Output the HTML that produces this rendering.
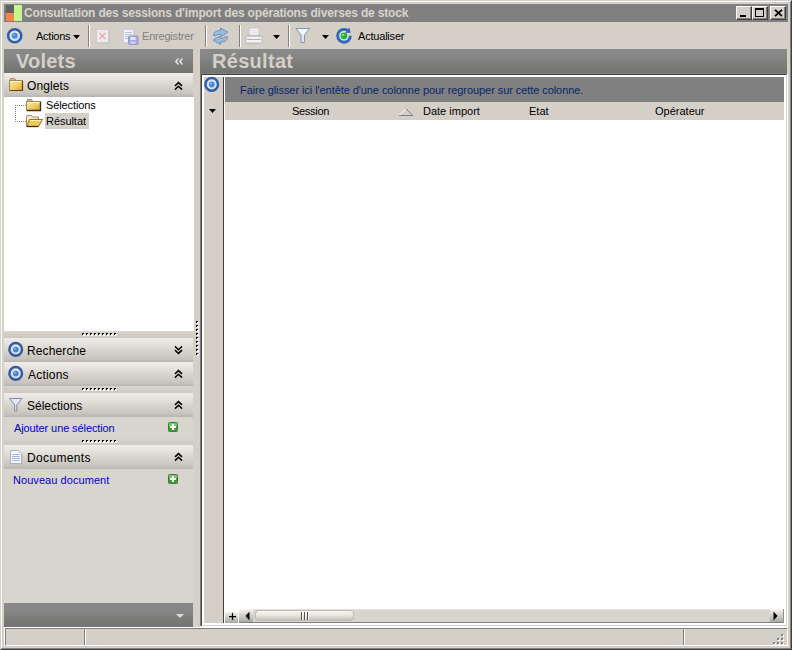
<!DOCTYPE html>
<html><head><meta charset="utf-8">
<style>
*{margin:0;padding:0;box-sizing:border-box}
html,body{width:792px;height:650px;overflow:hidden;background:#d4d0c8;font-family:"Liberation Sans",sans-serif;font-size:11px;color:#000}
.a{position:absolute}
.t{position:absolute;white-space:nowrap;line-height:13px}
svg{position:absolute;overflow:visible}
.cb{position:absolute;top:6px;width:16px;height:14px;background:#d4d0c8;border-top:1px solid #fff;border-left:1px solid #fff;border-right:1px solid #404040;border-bottom:1px solid #404040;box-shadow:inset -1px -1px 0 #808080}
.sep{position:absolute;top:25px;width:2px;height:22px;border-left:1px solid #808080;border-right:1px solid #fff}
.phdr{position:absolute;background:linear-gradient(#8a8a8a,#868686 35%,#7b7b79 65%,#737373)}
.ghdr{position:absolute;background:linear-gradient(#f0ede8 0,#e6e2dd 25%,#d6d3cd 55%,#c9c5be 85%,#b8b5b0 100%)}
.gt{position:absolute;white-space:nowrap;line-height:14px;font-size:12px}
.spl{position:absolute;left:4px;width:189px;height:7px;background:linear-gradient(#d8d5ce,#ccc8c0)}
.dots{position:absolute;width:36px;height:3px;background-image:linear-gradient(90deg,#000 2px,transparent 2px);background-size:4px 2px;background-repeat:repeat-x}
.dotsw{position:absolute;width:36px;height:3px;background-image:linear-gradient(90deg,transparent 1px,#fff 1px,#fff 2px,transparent 2px);background-size:4px 1px;background-repeat:repeat-x}
.lnk{position:absolute;white-space:nowrap;line-height:13px;color:#0000c8}
</style></head>
<body>
<!-- window frame -->
<div class="a" style="left:0;top:0;width:792px;height:650px;border-top:1px solid #d4d0c8;border-left:1px solid #d4d0c8;border-right:1px solid #404040;border-bottom:1px solid #404040"></div>
<div class="a" style="left:1px;top:1px;width:790px;height:648px;border-top:1px solid #fff;border-left:1px solid #fff;border-right:1px solid #808080;border-bottom:1px solid #808080"></div>

<!-- title bar -->
<div class="a" style="left:4px;top:4px;width:784px;height:18px;background:#808080"></div>
<div class="a" style="left:6px;top:5px;width:8px;height:8px;background:#626262"></div>
<div class="a" style="left:6px;top:13px;width:8px;height:8px;background:#f7854a"></div>
<div class="a" style="left:14px;top:5px;width:8px;height:16px;background:#c6f68e"></div>
<div class="t" style="left:24px;top:6px;font-weight:bold;color:#d8d4cc;font-size:12px;line-height:14px;letter-spacing:-0.17px">Consultation des sessions d'import des opérations diverses de stock</div>
<div class="cb" style="left:736px"><div class="a" style="left:3px;top:8px;width:6px;height:2px;background:#000"></div></div>
<div class="cb" style="left:752px"><div class="a" style="left:2px;top:1px;width:9px;height:9px;border:1px solid #000;border-top-width:2px"></div></div>
<div class="cb" style="left:770px"><svg style="left:3px;top:2px" width="9" height="8" viewBox="0 0 9 8"><path d="M1 0.8L8 7.2M8 0.8L1 7.2" stroke="#000" stroke-width="1.8"/></svg></div>

<!-- toolbar -->
<svg style="left:6px;top:28px" width="17" height="17" viewBox="0 0 17 17"><circle cx="8.7" cy="7.8" r="6.55" fill="#dde3ea" stroke="#2f5cac" stroke-width="2.5"/><circle cx="8.7" cy="7.7" r="3" fill="#4288e0"/><circle cx="8" cy="7" r="1" fill="#8ab8f0"/></svg>
<div class="t" style="left:36px;top:30px;letter-spacing:-0.25px">Actions</div>
<svg style="left:73px;top:35px" width="7" height="4" viewBox="0 0 7 4"><path d="M0 0H7L3.5 4Z" fill="#000"/></svg>
<div class="sep" style="left:88px"></div>
<!-- delete icon (disabled) -->
<svg style="left:96px;top:29px" width="14" height="15" viewBox="0 0 14 15"><rect x="1.5" y="1.5" width="12" height="13" fill="#c0bdb6"/><rect x="0.5" y="0.5" width="12" height="13" fill="#efebeb" stroke="#cfcbc6"/><path d="M3.5 4L9.5 10M9.5 4L3.5 10" stroke="#e4a8b6" stroke-width="1.4"/></svg>
<!-- save icon (disabled) -->
<svg style="left:122px;top:29px" width="17" height="16" viewBox="0 0 17 16"><rect x="1.5" y="0.5" width="10" height="13" fill="#f2f2f6" stroke="#ccd0dc"/><path d="M3 3.5H10M3 5.5H10M3 7.5H7M3 9.5H7" stroke="#b8c4e0" stroke-width="1"/><rect x="6.5" y="7" width="9.5" height="8.5" rx="1" fill="#a8a8dc" stroke="#9494cc"/><rect x="8.5" y="8" width="5" height="3" fill="#e6e6f4"/><rect x="8.5" y="12.5" width="5" height="2.5" fill="#d0d0ee"/></svg>
<div class="t" style="left:142px;top:30px;color:#808080;letter-spacing:-0.2px">Enregistrer</div>
<div class="sep" style="left:205px"></div>
<!-- refresh arrows (disabled) -->
<svg style="left:209px;top:26px" width="23" height="21" viewBox="0 0 23 21"><path d="M4.5 9.5Q5 4.2 11.5 4.5L11.5 2L19 6.3L12 10.5L12 8.3Q8 8 6.3 10Z" fill="#9cbcdc" stroke="#6888b4" stroke-width="0.9" stroke-linejoin="round"/><path d="M18.5 11Q18 16.3 11.5 16L11.5 18.5L4 14.2L11 10L11 12.2Q15 12.5 16.7 10.5Z" fill="#9cbcdc" stroke="#6888b4" stroke-width="0.9" stroke-linejoin="round"/></svg>
<div class="sep" style="left:239px"></div>
<!-- printer (disabled) -->
<svg style="left:245px;top:27px" width="18" height="18" viewBox="0 0 18 18"><rect x="4" y="1" width="10" height="7.5" fill="#f6f6f6" stroke="#c4c4c4" stroke-width="1"/><path d="M5.5 3.5H12.5M5.5 5.5H12.5" stroke="#e0e0e0"/><rect x="0.8" y="8.3" width="16.4" height="8.4" rx="2" fill="#f2f2f2" stroke="#b8b8b8" stroke-width="1"/><path d="M2 9.5H16" stroke="#c8c8c8"/><path d="M2 12.5H16" stroke="#b0b0b0" stroke-width="1"/><path d="M2 15.5H16" stroke="#d4d4d4"/></svg>
<svg style="left:273px;top:35px" width="7" height="4" viewBox="0 0 7 4"><path d="M0 0H7L3.5 4Z" fill="#000"/></svg>
<div class="sep" style="left:288px"></div>
<!-- filter -->
<svg style="left:295px;top:27px" width="16" height="17" viewBox="0 0 16 17"><path d="M1 1.5H14.5L9.5 8.5V15.5H6V8.5Z" fill="#dfe6f6" stroke="#8a96b4" stroke-width="1" stroke-linejoin="round"/><path d="M3 2.5H12.5L8.5 7.5H7Z" fill="#f4f8ff"/></svg>
<svg style="left:322px;top:35px" width="7" height="4" viewBox="0 0 7 4"><path d="M0 0H7L3.5 4Z" fill="#000"/></svg>
<!-- actualiser icon -->
<svg style="left:335px;top:27px" width="18" height="18" viewBox="0 0 18 18"><circle cx="9" cy="8.8" r="5" fill="#d8ead4"/><path d="M15.40 8.80A6.4 6.4 0 1 1 12.67 3.56" fill="none" stroke="#3566ba" stroke-width="2.9"/><path d="M14.15 0.57L15.78 5.74L10.37 5.97Z" fill="#3566ba"/><circle cx="9" cy="8.8" r="3.4" fill="#2aaa38"/><circle cx="8.2" cy="8" r="1.3" fill="#80e080"/></svg>
<div class="t" style="left:358px;top:30px;letter-spacing:-0.2px">Actualiser</div>

<!-- ===== left panel ===== -->
<div class="phdr" style="left:4px;top:49px;width:189px;height:24px"></div>
<div class="t" style="left:16px;top:50px;font-size:20px;line-height:22px;font-weight:bold;color:#d4d0c8;letter-spacing:0.2px">Volets</div>
<svg style="left:175px;top:58px" width="9" height="7" viewBox="0 0 9 7"><path d="M3.5 0.5L0.8 3.5L3.5 6.5M7.5 0.5L4.8 3.5L7.5 6.5" fill="none" stroke="#ececea" stroke-width="1.3"/></svg>

<div class="ghdr" style="left:4px;top:73px;width:189px;height:24px"></div>
<!-- folder -->
<svg style="left:9px;top:78px" width="15" height="14" viewBox="0 0 15 14"><defs><linearGradient id="fg" x1="0" y1="0" x2="1" y2="1"><stop offset="0" stop-color="#fcecb0"/><stop offset="0.6" stop-color="#f0c860"/><stop offset="1" stop-color="#d89a28"/></linearGradient></defs><path d="M1.5 0.5H5.5L6.5 2H1.5Z" fill="#f2e2b4" stroke="#a89060" stroke-width="1"/><rect x="0.5" y="2.5" width="13" height="10" fill="url(#fg)" stroke="#a08850"/><path d="M1 12.5H14M13.5 3V13" stroke="#5a4418" stroke-width="1.2"/><path d="M1.5 3.5H12.5" stroke="#fff4d0" stroke-width="1"/></svg>
<div class="gt" style="left:27px;top:79px;letter-spacing:0.1px">Onglets</div>
<svg style="left:174px;top:82px" width="9" height="8" viewBox="0 0 9 8"><path d="M1 3.9L4.5 0.6L8 3.9M1 7.6L4.5 4.3L8 7.6" fill="none" stroke="#000" stroke-width="1.5"/></svg>

<div class="a" style="left:4px;top:97px;width:190px;height:234px;background:#fff"></div>
<!-- tree lines -->
<div class="a" style="left:15px;top:105px;width:1px;height:17px;background-image:linear-gradient(#808080 1px,transparent 1px);background-size:1px 2px"></div>
<div class="a" style="left:15px;top:105px;width:11px;height:1px;background-image:linear-gradient(90deg,#808080 1px,transparent 1px);background-size:2px 1px"></div>
<div class="a" style="left:15px;top:121px;width:11px;height:1px;background-image:linear-gradient(90deg,#808080 1px,transparent 1px);background-size:2px 1px"></div>
<svg style="left:26px;top:99px" width="16" height="13" viewBox="0 0 16 13"><defs><linearGradient id="fg2" x1="0" y1="0" x2="1" y2="1"><stop offset="0" stop-color="#fcecb0"/><stop offset="0.6" stop-color="#f0c860"/><stop offset="1" stop-color="#d89a28"/></linearGradient></defs><path d="M1.5 0.5H5.5L6.5 2H1.5Z" fill="#f2e2b4" stroke="#a89060" stroke-width="1"/><rect x="0.5" y="2.5" width="14" height="9" fill="url(#fg2)" stroke="#a08850"/><path d="M1 11.5H15M14.5 3V12" stroke="#403010" stroke-width="1.3"/><path d="M1.5 3.5H13.5" stroke="#fff4d0" stroke-width="1"/></svg>
<div class="t" style="left:46px;top:99px;letter-spacing:-0.1px">Sélections</div>
<svg style="left:26px;top:115px" width="17" height="13" viewBox="0 0 17 13"><path d="M0.5 11.5V1.5Q0.5 0.5 1.5 0.5H5.5L6.5 2H12.5V4.5" fill="#f6eac4" stroke="#a08850"/><path d="M3.5 4.5H16.5L12.5 11.5H0.5Z" fill="#f0c850" stroke="#8c7438"/><path d="M4 5.5H15" stroke="#fff0b0"/><path d="M1 11.5H12.5" stroke="#403010" stroke-width="1.3"/></svg>
<div class="a" style="left:45px;top:113px;width:44px;height:16px;background:#d4d0c8"></div>
<div class="t" style="left:46px;top:115px;letter-spacing:-0.05px">Résultat</div>

<div class="a" style="left:4px;top:331px;width:189px;height:272px;background:#d8d5cf"></div>
<!-- splitter 1 -->
<div class="spl" style="top:331px"></div>
<div class="a" style="left:82px;top:333px;width:2px;height:2px;background:linear-gradient(135deg,#000 70%,#fff 70%);box-shadow:1px 1px 0 #fff"></div><div class="a" style="left:86px;top:333px;width:2px;height:2px;background:linear-gradient(135deg,#000 70%,#fff 70%);box-shadow:1px 1px 0 #fff"></div><div class="a" style="left:90px;top:333px;width:2px;height:2px;background:linear-gradient(135deg,#000 70%,#fff 70%);box-shadow:1px 1px 0 #fff"></div><div class="a" style="left:94px;top:333px;width:2px;height:2px;background:linear-gradient(135deg,#000 70%,#fff 70%);box-shadow:1px 1px 0 #fff"></div><div class="a" style="left:98px;top:333px;width:2px;height:2px;background:linear-gradient(135deg,#000 70%,#fff 70%);box-shadow:1px 1px 0 #fff"></div><div class="a" style="left:102px;top:333px;width:2px;height:2px;background:linear-gradient(135deg,#000 70%,#fff 70%);box-shadow:1px 1px 0 #fff"></div><div class="a" style="left:106px;top:333px;width:2px;height:2px;background:linear-gradient(135deg,#000 70%,#fff 70%);box-shadow:1px 1px 0 #fff"></div><div class="a" style="left:110px;top:333px;width:2px;height:2px;background:linear-gradient(135deg,#000 70%,#fff 70%);box-shadow:1px 1px 0 #fff"></div><div class="a" style="left:114px;top:333px;width:2px;height:2px;background:linear-gradient(135deg,#000 70%,#fff 70%);box-shadow:1px 1px 0 #fff"></div>

<div class="ghdr" style="left:4px;top:338px;width:189px;height:24px"></div>
<svg style="left:7px;top:341px" width="17" height="17" viewBox="0 0 17 17"><circle cx="8.7" cy="8.4" r="6.3" fill="#dde3ea" stroke="#355a9e" stroke-width="2.5"/><circle cx="8.8" cy="8.6" r="2.9" fill="#3f86e0"/><circle cx="8" cy="7.8" r="1" fill="#8ab8f0"/></svg>
<div class="gt" style="left:27px;top:344px;letter-spacing:0.12px">Recherche</div>
<svg style="left:174px;top:346px" width="9" height="8" viewBox="0 0 9 8"><path d="M1 0.4L4.5 3.7L8 0.4M1 4.1L4.5 7.4L8 4.1" fill="none" stroke="#000" stroke-width="1.5"/></svg>

<div class="ghdr" style="left:4px;top:362px;width:189px;height:24px"></div>
<svg style="left:7px;top:365px" width="17" height="17" viewBox="0 0 17 17"><circle cx="8.7" cy="8.4" r="6.3" fill="#dde3ea" stroke="#355a9e" stroke-width="2.5"/><circle cx="8.8" cy="8.6" r="2.9" fill="#3f86e0"/><circle cx="8" cy="7.8" r="1" fill="#8ab8f0"/></svg>
<div class="gt" style="left:28px;top:368px;letter-spacing:0.2px">Actions</div>
<svg style="left:174px;top:370px" width="9" height="8" viewBox="0 0 9 8"><path d="M1 3.9L4.5 0.6L8 3.9M1 7.6L4.5 4.3L8 7.6" fill="none" stroke="#000" stroke-width="1.5"/></svg>

<div class="spl" style="top:386px"></div>
<div class="a" style="left:82px;top:388px;width:2px;height:2px;background:linear-gradient(135deg,#000 70%,#fff 70%);box-shadow:1px 1px 0 #fff"></div><div class="a" style="left:86px;top:388px;width:2px;height:2px;background:linear-gradient(135deg,#000 70%,#fff 70%);box-shadow:1px 1px 0 #fff"></div><div class="a" style="left:90px;top:388px;width:2px;height:2px;background:linear-gradient(135deg,#000 70%,#fff 70%);box-shadow:1px 1px 0 #fff"></div><div class="a" style="left:94px;top:388px;width:2px;height:2px;background:linear-gradient(135deg,#000 70%,#fff 70%);box-shadow:1px 1px 0 #fff"></div><div class="a" style="left:98px;top:388px;width:2px;height:2px;background:linear-gradient(135deg,#000 70%,#fff 70%);box-shadow:1px 1px 0 #fff"></div><div class="a" style="left:102px;top:388px;width:2px;height:2px;background:linear-gradient(135deg,#000 70%,#fff 70%);box-shadow:1px 1px 0 #fff"></div><div class="a" style="left:106px;top:388px;width:2px;height:2px;background:linear-gradient(135deg,#000 70%,#fff 70%);box-shadow:1px 1px 0 #fff"></div><div class="a" style="left:110px;top:388px;width:2px;height:2px;background:linear-gradient(135deg,#000 70%,#fff 70%);box-shadow:1px 1px 0 #fff"></div><div class="a" style="left:114px;top:388px;width:2px;height:2px;background:linear-gradient(135deg,#000 70%,#fff 70%);box-shadow:1px 1px 0 #fff"></div>

<div class="ghdr" style="left:4px;top:393px;width:189px;height:24px"></div>
<svg style="left:6px;top:394px" width="20" height="20" viewBox="0 0 20 20"><path d="M3.5 4.5H16L10.8 11V17H8.7V11Z" fill="#e2e8f8" stroke="#848ca4" stroke-width="1" stroke-linejoin="round"/></svg>
<div class="gt" style="left:27px;top:399px">Sélections</div>
<svg style="left:174px;top:401px" width="9" height="8" viewBox="0 0 9 8"><path d="M1 3.9L4.5 0.6L8 3.9M1 7.6L4.5 4.3L8 7.6" fill="none" stroke="#000" stroke-width="1.5"/></svg>

<div class="lnk" style="left:14px;top:422px;letter-spacing:-0.1px">Ajouter une sélection</div>
<svg style="left:168px;top:422px" width="10" height="10" viewBox="0 0 10 10"><rect x="0.5" y="0.5" width="9" height="9" rx="1" fill="#3c9c3c" stroke="#4c7a3a"/><rect x="1" y="1" width="8" height="3" fill="#74c474"/><path d="M5 2V8M2 5H8" stroke="#fff" stroke-width="2"/></svg>

<div class="spl" style="top:438px"></div>
<div class="a" style="left:82px;top:440px;width:2px;height:2px;background:linear-gradient(135deg,#000 70%,#fff 70%);box-shadow:1px 1px 0 #fff"></div><div class="a" style="left:86px;top:440px;width:2px;height:2px;background:linear-gradient(135deg,#000 70%,#fff 70%);box-shadow:1px 1px 0 #fff"></div><div class="a" style="left:90px;top:440px;width:2px;height:2px;background:linear-gradient(135deg,#000 70%,#fff 70%);box-shadow:1px 1px 0 #fff"></div><div class="a" style="left:94px;top:440px;width:2px;height:2px;background:linear-gradient(135deg,#000 70%,#fff 70%);box-shadow:1px 1px 0 #fff"></div><div class="a" style="left:98px;top:440px;width:2px;height:2px;background:linear-gradient(135deg,#000 70%,#fff 70%);box-shadow:1px 1px 0 #fff"></div><div class="a" style="left:102px;top:440px;width:2px;height:2px;background:linear-gradient(135deg,#000 70%,#fff 70%);box-shadow:1px 1px 0 #fff"></div><div class="a" style="left:106px;top:440px;width:2px;height:2px;background:linear-gradient(135deg,#000 70%,#fff 70%);box-shadow:1px 1px 0 #fff"></div><div class="a" style="left:110px;top:440px;width:2px;height:2px;background:linear-gradient(135deg,#000 70%,#fff 70%);box-shadow:1px 1px 0 #fff"></div><div class="a" style="left:114px;top:440px;width:2px;height:2px;background:linear-gradient(135deg,#000 70%,#fff 70%);box-shadow:1px 1px 0 #fff"></div>

<div class="ghdr" style="left:4px;top:445px;width:189px;height:24px"></div>
<svg style="left:10px;top:450px" width="13" height="15" viewBox="0 0 13 15"><path d="M1.5 1.5H9L12.5 5V14.5H1.5Z" fill="#b8bcc4"/><path d="M0.5 0.5H8L11.5 4V13.5H0.5Z" fill="#f6f8ff" stroke="#a8b0c4"/><path d="M2 4.5H10M2 6.5H10M2 8.5H10M2 10.5H10" stroke="#a2b6e2" stroke-width="1"/></svg>
<div class="gt" style="left:27px;top:451px;letter-spacing:0.35px">Documents</div>
<svg style="left:174px;top:453px" width="9" height="8" viewBox="0 0 9 8"><path d="M1 3.9L4.5 0.6L8 3.9M1 7.6L4.5 4.3L8 7.6" fill="none" stroke="#000" stroke-width="1.5"/></svg>

<div class="lnk" style="left:13px;top:474px;letter-spacing:0.06px">Nouveau document</div>
<svg style="left:168px;top:474px" width="10" height="10" viewBox="0 0 10 10"><rect x="0.5" y="0.5" width="9" height="9" rx="1" fill="#3c9c3c" stroke="#4c7a3a"/><rect x="1" y="1" width="8" height="3" fill="#74c474"/><path d="M5 2V8M2 5H8" stroke="#fff" stroke-width="2"/></svg>

<!-- footer bar -->
<div class="phdr" style="left:4px;top:603px;width:189px;height:24px"></div>
<svg style="left:176px;top:614px" width="8" height="4" viewBox="0 0 8 4"><path d="M0 0H8L4 4Z" fill="#e0ddd6"/></svg>

<!-- vertical splitter grip -->
<div class="a" style="left:196px;top:321px;width:2px;height:2px;background:linear-gradient(135deg,#000 70%,#fff 70%);box-shadow:1px 1px 0 #fff"></div><div class="a" style="left:196px;top:325px;width:2px;height:2px;background:linear-gradient(135deg,#000 70%,#fff 70%);box-shadow:1px 1px 0 #fff"></div><div class="a" style="left:196px;top:329px;width:2px;height:2px;background:linear-gradient(135deg,#000 70%,#fff 70%);box-shadow:1px 1px 0 #fff"></div><div class="a" style="left:196px;top:333px;width:2px;height:2px;background:linear-gradient(135deg,#000 70%,#fff 70%);box-shadow:1px 1px 0 #fff"></div><div class="a" style="left:196px;top:337px;width:2px;height:2px;background:linear-gradient(135deg,#000 70%,#fff 70%);box-shadow:1px 1px 0 #fff"></div><div class="a" style="left:196px;top:341px;width:2px;height:2px;background:linear-gradient(135deg,#000 70%,#fff 70%);box-shadow:1px 1px 0 #fff"></div><div class="a" style="left:196px;top:345px;width:2px;height:2px;background:linear-gradient(135deg,#000 70%,#fff 70%);box-shadow:1px 1px 0 #fff"></div><div class="a" style="left:196px;top:349px;width:2px;height:2px;background:linear-gradient(135deg,#000 70%,#fff 70%);box-shadow:1px 1px 0 #fff"></div><div class="a" style="left:196px;top:353px;width:2px;height:2px;background:linear-gradient(135deg,#000 70%,#fff 70%);box-shadow:1px 1px 0 #fff"></div>

<!-- ===== right panel ===== -->
<div class="phdr" style="left:200px;top:49px;width:587px;height:24px"></div>
<div class="t" style="left:212px;top:50px;font-size:20px;line-height:22px;font-weight:bold;color:#d4d0c8;letter-spacing:0.3px">Résultat</div>
<!-- grid client edge -->
<div class="a" style="left:200px;top:73px;width:588px;height:554px;border-top:1px solid #808080;border-left:1px solid #808080;border-right:1px solid #fff;border-bottom:1px solid #fff"></div>
<div class="a" style="left:201px;top:74px;width:586px;height:552px;border-top:1px solid #404040;border-left:1px solid #404040;border-right:1px solid #d4d0c8;border-bottom:1px solid #d4d0c8;background:#fff"></div>
<!-- indicator column -->
<div class="a" style="left:204px;top:77px;width:19px;height:546px;background:#d4d0c8"></div>
<div class="a" style="left:223px;top:77px;width:1px;height:546px;background:#404040"></div>
<svg style="left:203px;top:76px" width="17" height="17" viewBox="0 0 17 17"><circle cx="8.7" cy="8.4" r="6.3" fill="#dde3ea" stroke="#2f5cac" stroke-width="2.5"/><circle cx="8.8" cy="8.5" r="2.9" fill="#4288e0"/><circle cx="8" cy="7.8" r="1" fill="#8ab8f0"/></svg>
<svg style="left:209px;top:109px" width="7" height="4" viewBox="0 0 7 4"><path d="M0 0H7L3.5 4Z" fill="#000"/></svg>
<!-- group by panel -->
<div class="a" style="left:225px;top:77px;width:559px;height:25px;background:#808080"></div>
<div class="t" style="left:240px;top:84px;color:#0a246a;letter-spacing:-0.07px">Faire glisser ici l'entête d'une colonne pour regrouper sur cette colonne.</div>
<!-- header row -->
<div class="a" style="left:225px;top:102px;width:559px;height:18px;background:#d4d0c8"></div>
<div class="t" style="left:292px;top:105px;letter-spacing:-0.3px">Session</div>
<svg style="left:398px;top:108px" width="16" height="9" viewBox="0 0 16 9"><path d="M1 7.5L8 1" stroke="#fff" stroke-width="1"/><path d="M8 1L15 7.5H1" fill="none" stroke="#808080" stroke-width="1"/></svg>
<div class="t" style="left:423px;top:105px">Date import</div>
<div class="t" style="left:529px;top:105px">Etat</div>
<div class="t" style="left:655px;top:105px">Opérateur</div>

<!-- horizontal scrollbar -->
<div class="a" style="left:225px;top:612px;width:13px;height:11px;background:linear-gradient(#f4f2ee,#a8a6a0)"></div>
<svg style="left:228px;top:612px" width="8" height="8" viewBox="0 0 8 8"><path d="M4.5 1V8M1 4.5H8" stroke="#000" stroke-width="1.25"/></svg>
<div class="a" style="left:239px;top:609px;width:545px;height:14px;background:#d7d4ce;border-top:1px solid #e4e2dc;border-bottom:1px solid #808080"></div>
<div class="a" style="left:239px;top:609px;width:14px;height:14px;background:linear-gradient(#f8f6f2,#aaa8a2);border-bottom:1px solid #808080"></div>
<svg style="left:245px;top:611px" width="5" height="10" viewBox="0 0 5 10"><path d="M4.5 0.5V9.5L0.5 5Z" fill="#000"/></svg>
<div class="a" style="left:255px;top:610px;width:99px;height:11px;border-radius:4px;background:linear-gradient(#f8f6f2,#e8e5df 50%,#c6c2ba);border:1px solid #c0bcb4"></div>
<div class="a" style="left:301px;top:612px;width:8px;height:8px;background-image:linear-gradient(90deg,#505050 1px,#fff 1px,#fff 2px,transparent 2px);background-size:3px 8px"></div>
<div class="a" style="left:770px;top:609px;width:14px;height:14px;background:linear-gradient(#f8f6f2,#aaa8a2);border-bottom:1px solid #808080;border-right:1px solid #909090"></div>
<svg style="left:773px;top:611px" width="5" height="10" viewBox="0 0 5 10"><path d="M0.5 0.5V9.5L4.5 5Z" fill="#000"/></svg>

<!-- status bar -->
<div class="a" style="left:4px;top:627px;width:784px;height:1px;background:#fff"></div>
<div class="a" style="left:4px;top:627px;width:1px;height:19px;background:#fff"></div>
<div class="a" style="left:5px;top:628px;width:783px;height:18px;border-top:1px solid #808080;border-left:1px solid #808080;border-bottom:1px solid #fff;border-right:1px solid #fff"></div>
<div class="a" style="left:84px;top:629px;width:1px;height:16px;background:#808080"></div>
<div class="a" style="left:85px;top:629px;width:1px;height:16px;background:#fff"></div>
<div class="a" style="left:683px;top:629px;width:1px;height:16px;background:#808080"></div>
<div class="a" style="left:684px;top:629px;width:1px;height:16px;background:#fff"></div>
<!-- grip -->
<div class="a" style="left:781px;top:634px;width:2px;height:2px;background:#808080;box-shadow:1px 1px 0 #fff"></div><div class="a" style="left:777px;top:638px;width:2px;height:2px;background:#808080;box-shadow:1px 1px 0 #fff"></div><div class="a" style="left:781px;top:638px;width:2px;height:2px;background:#808080;box-shadow:1px 1px 0 #fff"></div><div class="a" style="left:773px;top:642px;width:2px;height:2px;background:#808080;box-shadow:1px 1px 0 #fff"></div><div class="a" style="left:777px;top:642px;width:2px;height:2px;background:#808080;box-shadow:1px 1px 0 #fff"></div><div class="a" style="left:781px;top:642px;width:2px;height:2px;background:#808080;box-shadow:1px 1px 0 #fff"></div>
</body></html>
